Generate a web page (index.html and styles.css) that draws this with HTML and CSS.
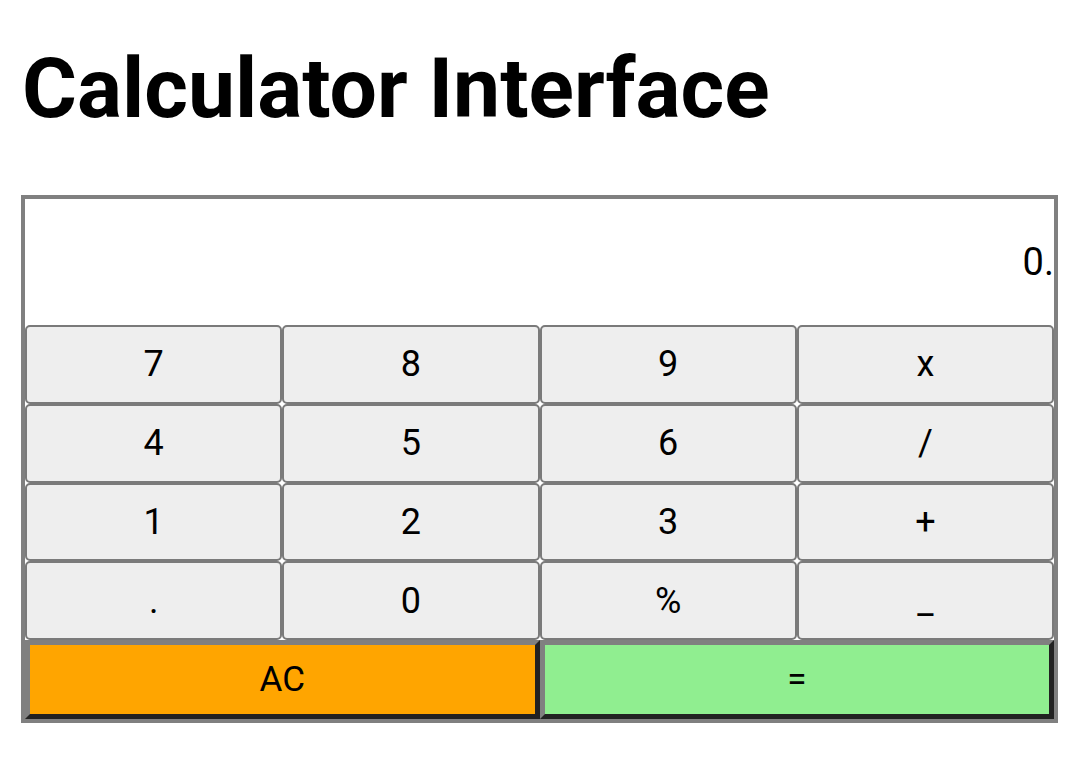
FILE: index.html
```html
<!DOCTYPE html>
<html lang="en">
<head>
    <meta charset="UTF-8">
    <meta name="viewport" content="width=device-width, initial-scale=1.0">
    <title>Calculator Interface</title>
    <link rel="stylesheet" href="styles.css">
</head>
<body>

    <div class="page">
        <h1>Calculator Interface</h1>

        <div class="calculator">
            <!-- Display -->
            <div class="display">0.</div>

            <!-- Keys -->
            <div class="keys">
                <button class="key">7</button>
                <button class="key">8</button>
                <button class="key">9</button>
                <button class="key">x</button>
                <button class="key">4</button>
                <button class="key">5</button>
                <button class="key">6</button>
                <button class="key">/</button>
                <button class="key">1</button>
                <button class="key">2</button>
                <button class="key">3</button>
                <button class="key">+</button>
                <button class="key">.</button>
                <button class="key">0</button>
                <button class="key">%</button>
                <button class="key">_</button>
            </div>

            <!-- Bottom row -->
            <div class="actions">
                <button class="action clear">AC</button>
                <button class="action equals">=</button>
            </div>
        </div>
    </div>

</body>
</html>
```

FILE: styles.css
```css
body {
    font-family: Roboto, "Liberation Sans", sans-serif;
    background-color: #ffffff;
    margin: 0;
}

.page {
    padding: 0 22px 0 21px;
}

h1 {
    font-size: 84px;
    font-weight: bold;
    margin: 39px 0 57px 1px;
}

.calculator {
    border: 4px solid #808080;
    background-color: #ffffff;
}

.display {
    height: 126px;
    display: flex;
    justify-content: flex-end;
    align-items: center;
    font-size: 38px;
    overflow: hidden;
}

.keys {
    display: grid;
    grid-template-columns: repeat(4, 1fr);
    grid-auto-rows: 78.75px;
}

.key {
    font-family: Roboto, "Liberation Sans", sans-serif;
    font-size: 36px;
    color: #000000;
    background-color: #eeeeee;
    border: 2px solid #7a7a7a;
    border-radius: 5px;
    padding: 0;
    margin: 0;
}

.actions {
    display: grid;
    grid-template-columns: 1fr 1fr;
}

.action {
    height: 79px;
    font-family: Roboto, "Liberation Sans", sans-serif;
    font-size: 35px;
    color: #000000;
    border: 5px solid;
    border-color: #808080 #222222 #222222 #808080;
    padding: 0;
    margin: 0;
}

.clear {
    background-color: orange;
}

.equals {
    background-color: lightgreen;
}
```
